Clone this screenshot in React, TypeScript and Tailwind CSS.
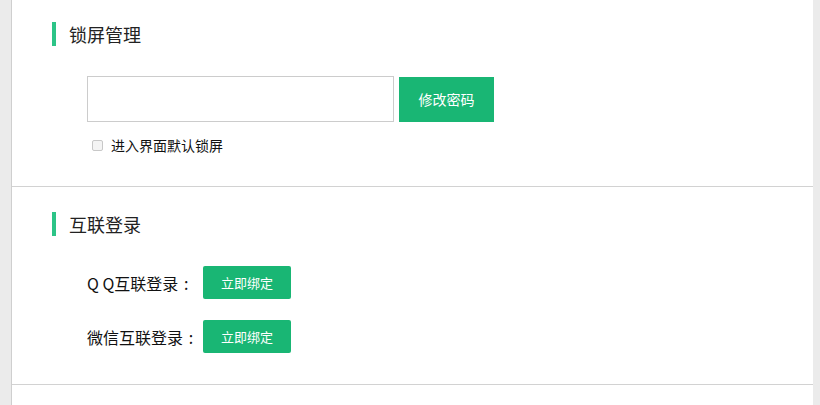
const font = { fontFamily: '"Microsoft YaHei", "Noto Sans CJK SC", sans-serif' };

function SectionTitle({ text }: { text: string }) {
  return (
    <div className="flex h-[24px] items-center">
      <span className="h-[24px] w-[4px] bg-[#2cc487]" />
      <span className="ml-[13px] text-[18px] leading-none text-[#222]">{text}</span>
    </div>
  );
}

function BindRow({ label }: { label: string }) {
  return (
    <div className="flex items-center">
      <span className="flex w-[116px] items-center text-[16px] leading-none text-[#111]">
        {label}
        <span className="w-[16px] text-center">:</span>
      </span>
      <button className="h-[33px] w-[88px] rounded-[2px] bg-[#19b674] text-[13px] text-white">
        立即绑定
      </button>
    </div>
  );
}

export default function App() {
  return (
    <div className="flex h-[405px] w-[820px] overflow-hidden bg-[#ebebeb]" style={font}>
      <div className="w-[11px] shrink-0" />
      <div className="w-[802px] shrink-0 border-l border-[#cfcfcf] bg-white">
        <section className="h-[187px] border-b border-[#d2d2d2] pl-[40px] pt-[22px]">
          <SectionTitle text="锁屏管理" />
          <div className="ml-[35px] mt-[30px] flex items-start">
            <input className="h-[46px] w-[307px] border border-[#cccccc] px-2 outline-none" />
            <button className="ml-[5px] mt-[1px] h-[45px] w-[95px] bg-[#19b674] text-[14px] text-white">
              修改密码
            </button>
          </div>
          <label className="ml-[40px] mt-[16px] flex items-center">
            <span className="h-[11px] w-[11px] rounded-[2px] border border-[#c8c8c8] bg-[#f4f4f4]" />
            <span className="ml-[8px] text-[14px] leading-none text-[#111]">进入界面默认锁屏</span>
          </label>
        </section>
        <section className="h-[198px] border-b border-[#d2d2d2] pl-[40px] pt-[25px]">
          <SectionTitle text="互联登录" />
          <div className="ml-[35px] mt-[30px] flex flex-col gap-[21px]">
            <BindRow label="Q Q互联登录" />
            <BindRow label="微信互联登录" />
          </div>
        </section>
      </div>
      <div className="flex-1" />
    </div>
  );
}
